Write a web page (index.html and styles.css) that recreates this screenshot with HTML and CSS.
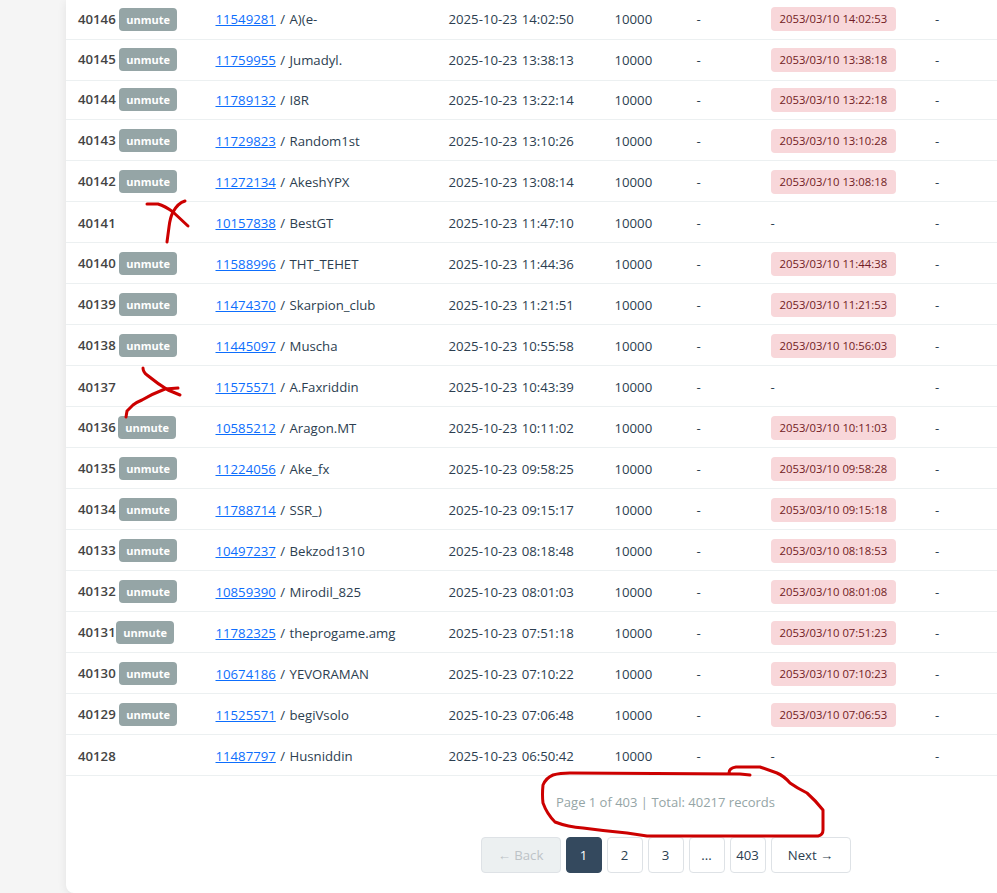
FILE: index.html
```html
<!DOCTYPE html>
<html lang="en">
<head>
<meta charset="utf-8">
<title>Mutes</title>
<link rel="stylesheet" href="styles.css">
</head>
<body>
<main class="page">
<section class="card">
<table class="log">
<colgroup><col class="c-id"><col class="c-user"><col class="c-date"><col class="c-amt"><col class="c-a"><col class="c-until"><col class="c-b"></colgroup>
<tbody>
<tr class="first"><td class="id">40146 <span class="btn-un">unmute</span></td><td><a href="#">11549281</a> / A)(e-</td><td>2025-10-23 14:02:50</td><td>10000</td><td>-</td><td><span class="until">2053/03/10 14:02:53</span></td><td>-</td></tr>
<tr><td class="id">40145 <span class="btn-un">unmute</span></td><td><a href="#">11759955</a> / Jumadyl.</td><td>2025-10-23 13:38:13</td><td>10000</td><td>-</td><td><span class="until">2053/03/10 13:38:18</span></td><td>-</td></tr>
<tr class="short"><td class="id">40144 <span class="btn-un">unmute</span></td><td><a href="#">11789132</a> / I8R</td><td>2025-10-23 13:22:14</td><td>10000</td><td>-</td><td><span class="until">2053/03/10 13:22:18</span></td><td>-</td></tr>
<tr><td class="id">40143 <span class="btn-un">unmute</span></td><td><a href="#">11729823</a> / Random1st</td><td>2025-10-23 13:10:26</td><td>10000</td><td>-</td><td><span class="until">2053/03/10 13:10:28</span></td><td>-</td></tr>
<tr><td class="id">40142 <span class="btn-un">unmute</span></td><td><a href="#">11272134</a> / AkeshYPX</td><td>2025-10-23 13:08:14</td><td>10000</td><td>-</td><td><span class="until">2053/03/10 13:08:18</span></td><td>-</td></tr>
<tr><td class="id">40141</td><td><a href="#">10157838</a> / BestGT</td><td>2025-10-23 11:47:10</td><td>10000</td><td>-</td><td>-</td><td>-</td></tr>
<tr><td class="id">40140 <span class="btn-un">unmute</span></td><td><a href="#">11588996</a> / THT_TEHET</td><td>2025-10-23 11:44:36</td><td>10000</td><td>-</td><td><span class="until">2053/03/10 11:44:38</span></td><td>-</td></tr>
<tr><td class="id">40139 <span class="btn-un">unmute</span></td><td><a href="#">11474370</a> / Skarpion_club</td><td>2025-10-23 11:21:51</td><td>10000</td><td>-</td><td><span class="until">2053/03/10 11:21:53</span></td><td>-</td></tr>
<tr><td class="id">40138 <span class="btn-un">unmute</span></td><td><a href="#">11445097</a> / Muscha</td><td>2025-10-23 10:55:58</td><td>10000</td><td>-</td><td><span class="until">2053/03/10 10:56:03</span></td><td>-</td></tr>
<tr><td class="id">40137</td><td><a href="#">11575571</a> / A.Faxriddin</td><td>2025-10-23 10:43:39</td><td>10000</td><td>-</td><td>-</td><td>-</td></tr>
<tr><td class="id">40136 <span class="btn-un narrow-s">unmute</span></td><td><a href="#">10585212</a> / Aragon.MT</td><td>2025-10-23 10:11:02</td><td>10000</td><td>-</td><td><span class="until">2053/03/10 10:11:03</span></td><td>-</td></tr>
<tr><td class="id">40135 <span class="btn-un">unmute</span></td><td><a href="#">11224056</a> / Ake_fx</td><td>2025-10-23 09:58:25</td><td>10000</td><td>-</td><td><span class="until">2053/03/10 09:58:28</span></td><td>-</td></tr>
<tr><td class="id">40134 <span class="btn-un">unmute</span></td><td><a href="#">11788714</a> / SSR_)</td><td>2025-10-23 09:15:17</td><td>10000</td><td>-</td><td><span class="until">2053/03/10 09:15:18</span></td><td>-</td></tr>
<tr><td class="id">40133 <span class="btn-un">unmute</span></td><td><a href="#">10497237</a> / Bekzod1310</td><td>2025-10-23 08:18:48</td><td>10000</td><td>-</td><td><span class="until">2053/03/10 08:18:53</span></td><td>-</td></tr>
<tr><td class="id">40132 <span class="btn-un">unmute</span></td><td><a href="#">10859390</a> / Mirodil_825</td><td>2025-10-23 08:01:03</td><td>10000</td><td>-</td><td><span class="until">2053/03/10 08:01:08</span></td><td>-</td></tr>
<tr><td class="id">40131 <span class="btn-un narrow">unmute</span></td><td><a href="#">11782325</a> / theprogame.amg</td><td>2025-10-23 07:51:18</td><td>10000</td><td>-</td><td><span class="until">2053/03/10 07:51:23</span></td><td>-</td></tr>
<tr><td class="id">40130 <span class="btn-un">unmute</span></td><td><a href="#">10674186</a> / YEVORAMAN</td><td>2025-10-23 07:10:22</td><td>10000</td><td>-</td><td><span class="until">2053/03/10 07:10:23</span></td><td>-</td></tr>
<tr><td class="id">40129 <span class="btn-un">unmute</span></td><td><a href="#">11525571</a> / begiVsolo</td><td>2025-10-23 07:06:48</td><td>10000</td><td>-</td><td><span class="until">2053/03/10 07:06:53</span></td><td>-</td></tr>
<tr><td class="id">40128</td><td><a href="#">11487797</a> / Husniddin</td><td>2025-10-23 06:50:42</td><td>10000</td><td>-</td><td>-</td><td>-</td></tr>
</tbody>
</table>
<p class="info">Page 1 of 403 | Total: 40217 records</p>
<nav class="pager">
<span class="pg wide off">← Back</span>
<span class="pg on">1</span>
<a class="pg" href="#">2</a>
<a class="pg" href="#">3</a>
<span class="pg">...</span>
<a class="pg" href="#">403</a>
<a class="pg wide" href="#">Next →</a>
</nav>
</section>
</main>
<svg class="ink" width="997" height="893" viewBox="0 0 997 893" aria-hidden="true">
<path d="M147 204 L158 204 Q165 206 173 212 L188 226"/>
<path d="M185 201 Q178 203 173 212 Q170 218 169 227 L167 242"/>
<path d="M143 368 Q143 372 147 375 Q158 384 168 390 L180 395"/>
<path d="M178 388 L165 389 Q152 394 142 400 Q137 402 133 405 L127 411 L126 417"/>
<path d="M750 775 L740 774 L570 773 Q560 773 553 775 Q546 778 543 785 Q542 795 543 803 Q547 814 555 822 Q568 827 583 828 Q605 831 627 833 L647 836 L818 836 Q823 835 823 830 L823 810 Q815 800 807 793 Q797 788 790 783 Q784 776 777 773 L760 767 L736 767 Q729 768 729 773"/>
</svg>
</body>
</html>
```
FILE: styles.css
```css
* { box-sizing: border-box; }
html, body { margin: 0; height: 893px; overflow: hidden; }
body { background: #f5f5f5; color: #2c3e50; font: 13.2px/20px "Open Sans", "Liberation Sans", sans-serif; position: relative; }
.page { padding-left: 66px; }
.card { height: 893px; background: #fff; border-radius: 0 0 0 8px; box-shadow: 0 2px 10px rgba(0,0,0,.08); }
.log { width: 100%; border-collapse: collapse; table-layout: fixed; }
.c-id { width: 137.5px; } .c-user { width: 233px; } .c-date { width: 166px; } .c-amt { width: 82px; }
.c-a { width: 74px; } .c-until { width: 164.5px; }
.log tr { height: 41px; }
.log tr.first { height: 39px; }
.log tr.short { height: 39px; }
.log td { padding: 0 12px; border-bottom: 1px solid #ecf0f1; white-space: nowrap; vertical-align: middle; word-spacing: 1px; }
.log tr:nth-child(n+4) td { padding-top: 2px; }
.log td.id { font-weight: 600; color: #444; word-spacing: 0; }
.log a { color: #0d6efd; }
.btn-un { display: inline-block; width: 58px; height: 23px; text-align: center; background: #95a5a6; color: #fff; border-radius: 4px; font-size: 11px; line-height: 23px; font-weight: 700; vertical-align: baseline; }
.btn-un.narrow { margin-left: -3px; }
.btn-un.narrow-s { margin-left: -1px; }
.until { display: inline-block; height: 24px; padding: 0 9px; background: #f8d7da; color: #721c24; border-radius: 4px; font-size: 11.3px; line-height: 24px; word-spacing: 0; }
.info { margin: 16px 0 0; padding-left: 268px; text-align: center; color: #95a5a6; font-size: 13px; line-height: 20px; }
.pager { display: flex; justify-content: center; gap: 5px; margin-top: 25px; padding-left: 268px; }
.pg { display: flex; align-items: center; justify-content: center; width: 36px; height: 36px; border: 1px solid #dee2e6; border-radius: 4px; background: #fff; color: #2c3e50; text-decoration: none; font-size: 13.2px; }
.pg.wide { width: 80px; }
.pg.on { background: #34495e; border-color: #34495e; color: #fff; }
.pg.off { background: #ecf0f1; color: #bdc3c7; }
.ink { position: absolute; left: 0; top: 0; pointer-events: none; }
.ink path { fill: none; stroke: #cc0000; stroke-width: 3; stroke-linecap: round; stroke-linejoin: round; }
```
